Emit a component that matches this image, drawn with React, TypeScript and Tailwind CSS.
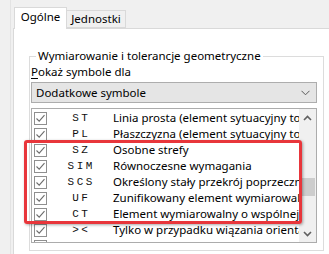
import React from 'react';

const rows = [
  { code: 'ST', text: 'Linia prosta (element sytuacyjny tolerancji)' },
  { code: 'PL', text: 'Płaszczyzna (element sytuacyjny tolerancji)' },
  { code: 'SZ', text: 'Osobne strefy' },
  { code: 'SIM', text: 'Równoczesne wymagania' },
  { code: 'SCS', text: 'Określony stały przekrój poprzeczny' },
  { code: 'UF', text: 'Zunifikowany element wymiarowalny' },
  { code: 'CT', text: 'Element wymiarowalny o wspólnej strefie' },
  { code: '><', text: 'Tylko w przypadku wiązania orientacji' },
  { code: '', text: 'Stan swobodny' },
];

const Check = () => (
  <div className="w-[13px] h-[13px] border border-[#8f8f8f] bg-white flex items-center justify-center shrink-0">
    <svg width="11" height="11" viewBox="0 0 11 11">
      <path d="M1.5 5.5 L4.2 8.2 L9.5 2.2" fill="none" stroke="#6d6d6d" strokeWidth="1.1" />
    </svg>
  </div>
);

const Row = ({ code, text }: { code: string; text: string }) => (
  <div className="h-[16px] flex items-center pl-[2px]">
    <Check />
    <div className="w-[66px] shrink-0 flex justify-center">
      {code ? (
        <span
          className="text-[11px] tracking-[2.5px] pl-[2.5px] text-[#111]"
          style={{ fontFamily: '"Liberation Mono", monospace' }}
        >
          {code}
        </span>
      ) : (
        <svg width="24" height="14" viewBox="0 0 24 14" className="mt-[6px]">
          <ellipse cx="12" cy="7" rx="10" ry="5.5" fill="none" stroke="#222" strokeWidth="1" />
          <path d="M5 7 H19" stroke="#222" strokeWidth="1" />
        </svg>
      )}
    </div>
    <span className="whitespace-nowrap text-[#000]">{text}</span>
  </div>
);

export default function App() {
  return (
    <div
      className="w-[329px] h-[254px] bg-[#f0f0f0] overflow-hidden relative text-[11.5px] text-black"
      style={{ fontFamily: '"Noto Sans", "Open Sans", sans-serif' }}
    >
      <div className="ml-[10px] h-full border-l border-[#e3e3e3] pl-[2px] pt-[7px]">
        {/* tabs */}
        <div className="flex items-end h-[22px] pl-px">
          <div className="relative z-10 w-[53px] h-[22px] bg-white border border-b-0 border-[#d9d9d9] flex items-center justify-center pb-[3px]">
            Ogólne
          </div>
          <div className="w-[59px] h-[18px] mb-px bg-[#f0f0f0] border border-l-0 border-[#d9d9d9] flex items-center justify-center pb-px">
            Jednostki
          </div>
        </div>

        {/* tab panel */}
        <div className="-mt-px h-[300px] bg-white border border-r-0 border-[#d9d9d9] pl-[15px] pt-[19px]">
          <fieldset className="w-[295px] min-w-0 border border-[#dcdcdc] pl-px pr-[6px] pb-[7px]">
            <legend className="ml-[5px] px-[2px] leading-[16px]">
              Wymiarowanie i tolerancje geometryczne
            </legend>
            <div className="leading-[15px]">
              <span className="underline underline-offset-2">P</span>okaż symbole dla
            </div>
            <div className="mt-[3px] h-[21px] border border-[#adadad] bg-[#e5e5e5] flex items-center justify-between pl-[4px] pr-[6px]">
              <span>Dodatkowe symbole</span>
              <svg width="9" height="6" viewBox="0 0 9 6">
                <path d="M0.5 0.8 L4.5 4.8 L8.5 0.8" fill="none" stroke="#5a5a5a" strokeWidth="1" />
              </svg>
            </div>
            <div className="mt-[5px] h-[135px] border border-[#acacac] bg-white flex overflow-hidden">
              <div className="flex-1 min-w-0 overflow-hidden pt-px">
                {rows.map((r, i) => (
                  <Row key={i} code={r.code} text={r.text} />
                ))}
              </div>
              <div className="w-[17px] shrink-0 bg-[#f0f0f0] flex flex-col">
                <div className="h-[17px] flex items-center justify-center">
                  <svg width="9" height="6" viewBox="0 0 9 6">
                    <path d="M1 5 L4.5 1.5 L8 5" fill="none" stroke="#606060" strokeWidth="1.6" />
                  </svg>
                </div>
                <div className="h-[52px]" />
                <div className="h-[18px] mx-px bg-[#cdcdcd]" />
                <div className="flex-1" />
                <div className="h-[17px] flex items-center justify-center">
                  <svg width="9" height="6" viewBox="0 0 9 6">
                    <path d="M1 1 L4.5 4.5 L8 1" fill="none" stroke="#606060" strokeWidth="1.6" />
                  </svg>
                </div>
              </div>
            </div>
          </fieldset>
        </div>
      </div>

      {/* red highlight */}
      <div className="absolute left-[24px] top-[140px] w-[278px] h-[84px] border-[3px] border-[#e8363b] rounded-[3px] shadow-[1px_1px_3px_rgba(0,0,0,0.35)]" />
    </div>
  );
}
